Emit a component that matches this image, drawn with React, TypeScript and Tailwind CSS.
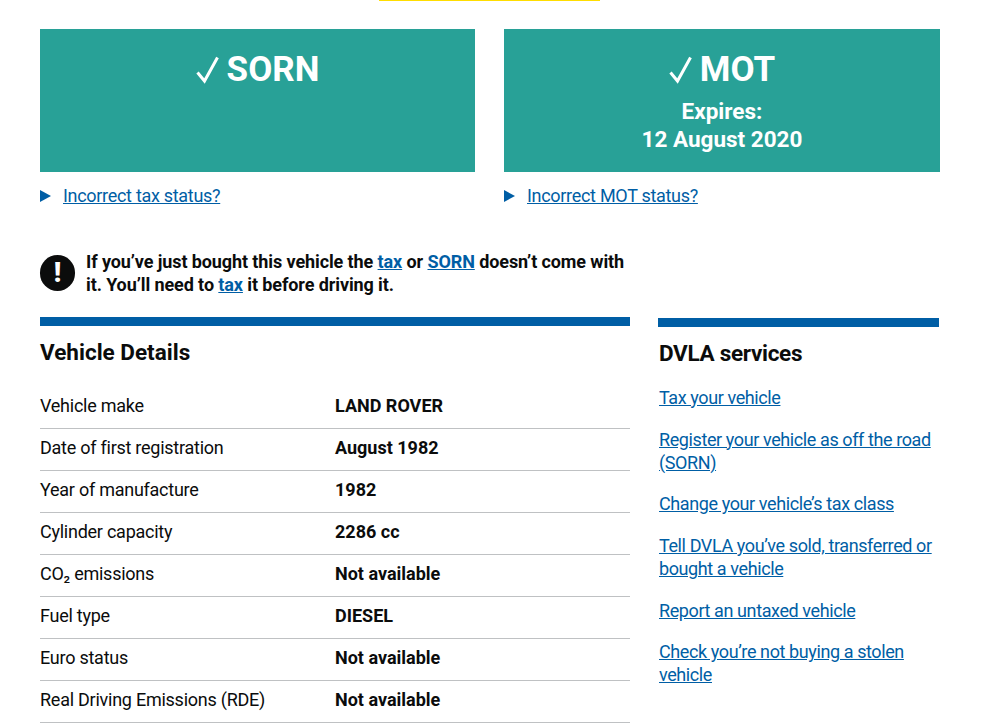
import React from 'react';

const vehicleRows = [
  { label: 'Vehicle make', value: 'LAND ROVER' },
  { label: 'Date of first registration', value: 'August 1982' },
  { label: 'Year of manufacture', value: '1982' },
  { label: 'Cylinder capacity', value: '2286 cc' },
  { label: 'CO₂ emissions', value: 'Not available' },
  { label: 'Fuel type', value: 'DIESEL' },
  { label: 'Euro status', value: 'Not available' },
  { label: 'Real Driving Emissions (RDE)', value: 'Not available' },
];

const services = [
  'Tax your vehicle',
  'Register your vehicle as off the road (SORN)',
  'Change your vehicle’s tax class',
  'Tell DVLA you’ve sold, transferred or bought a vehicle',
  'Report an untaxed vehicle',
  'Check you’re not buying a stolen vehicle',
];

function Tick() {
  return (
    <svg width="24" height="28" viewBox="0 0 24 28" className="shrink-0" aria-hidden="true">
      <path d="M1.5 16.5 L8.5 25 L21.5 1.5" fill="none" stroke="#fff" strokeWidth="3" />
    </svg>
  );
}

function StatusCard({ title, children, link, className }: { title: string; children?: React.ReactNode; link: string; className: string }) {
  return (
    <div className={className}>
      <div className="h-[143px] bg-[#28a197] pt-[19px] text-center text-white">
        <div className="flex h-[44px] items-center justify-center gap-[7px] text-[35px] leading-[44px] font-bold">
          <Tick />
          <span>{title}</span>
        </div>
        {children}
      </div>
      <div className="mt-[13px] flex items-center text-[18px] leading-[22px] tracking-[-0.3px]">
        <span className="mr-[12px] h-0 w-0 border-y-[6px] border-l-[11px] border-y-transparent border-l-[#005ea5]" />
        <a href="#" className="text-[#005ea5] underline">{link}</a>
      </div>
    </div>
  );
}

export default function App() {
  return (
    <div className="font-['Roboto',sans-serif] h-[723px] w-[1008px] overflow-hidden bg-white text-[#0b0c0c]">
      <div className="ml-[379px] h-px w-[221px] bg-[#ffdd00]" />
      <div className="px-[40px] pt-[28px]">
        <div className="flex w-[900px] justify-between">
          <StatusCard className="w-[435px]" title="SORN" link="Incorrect tax status?" />
          <StatusCard className="w-[436px]" title="MOT" link="Incorrect MOT status?">
            <div className="mt-[5px] text-[22.5px] leading-[28px] font-bold">
              Expires:
              <br />
              12 August 2020
            </div>
          </StatusCard>
        </div>

        <div className="mt-[43px] flex h-[46px] w-[590px] items-center gap-[11px]">
          <span className="flex h-[36px] w-[35px] shrink-0 items-center justify-center rounded-full bg-[#0b0c0c] text-[27px] font-black text-white">!</span>
          <p className="text-[18px] leading-[23px] font-bold tracking-[-0.1px]">
            If you’ve just bought this vehicle the <a href="#" className="text-[#005ea5] underline">tax</a> or{' '}
            <a href="#" className="text-[#005ea5] underline">SORN</a> doesn’t come with it. You’ll need to{' '}
            <a href="#" className="text-[#005ea5] underline">tax</a> it before driving it.
          </p>
        </div>

        <div className="mt-[21px] flex items-start gap-[28px]">
          <section className="w-[590px]">
            <div className="h-[9px] bg-[#005ea5]" />
            <h2 className="mt-[11px] text-[22.5px] leading-[30px] font-bold">Vehicle Details</h2>
            <dl className="mt-[20px]">
              {vehicleRows.map((row) => (
                <div key={row.label} className="flex h-[42px] items-start border-b border-[#bfc1c3] pt-[8px] text-[18px] leading-[22px]">
                  <dt className="w-[295px] tracking-[-0.25px]">{row.label}</dt>
                  <dd className="font-bold">{row.value}</dd>
                </div>
              ))}
            </dl>
          </section>
          <aside className="w-[281px] pt-px">
            <div className="h-[9px] bg-[#005ea5]" />
            <h2 className="mt-[11px] pl-px text-[22.5px] leading-[30px] font-bold tracking-[-0.3px]">DVLA services</h2>
            <ul className="mt-[18px] flex flex-col gap-[18.7px] pl-px text-[18px] leading-[23px] tracking-[-0.4px]">
              {services.map((s) => (
                <li key={s}>
                  <a href="#" className="text-[#005ea5] underline">{s}</a>
                </li>
              ))}
            </ul>
          </aside>
        </div>
      </div>
    </div>
  );
}
